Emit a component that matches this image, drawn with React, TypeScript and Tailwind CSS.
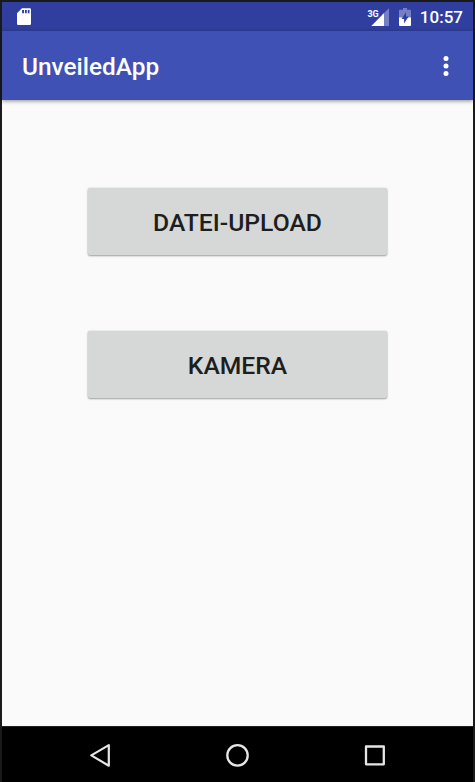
import React from "react";

function SdCardIcon() {
  return (
    <svg width="15" height="18" viewBox="0 0 15 18" className="block">
      <path fillRule="evenodd" fill="#fff" d="M5 0.2H12.8Q14 0.2 14 1.4V15.8Q14 17 12.8 17H1.2Q0 17 0 15.8V5.3ZM5.1 2V5.2H7V2ZM8 2V5.2H9.8V2ZM10.8 2V5.2H12.5V2Z" />
    </svg>
  );
}

function SignalIcon() {
  return (
    <svg width="24" height="20" viewBox="0 0 24 20" className="block">
      <text x="0.5" y="8.6" fill="#fff" fontSize="9.5" fontWeight="700" textLength="11.2" lengthAdjust="spacingAndGlyphs">3G</text>
      <path d="M17.3 4.8V18H4.3Z" fill="#fff" />
      <path d="M17.3 4.8L22 0.3V18H17.3Z" fill="#757fc4" />
    </svg>
  );
}

function BatteryIcon() {
  return (
    <svg width="12" height="18" viewBox="0 0 12 18" className="block">
      <path d="M4 0H8V1.8H11Q12 1.8 12 2.8V10H0V2.8Q0 1.8 1 1.8H4Z" fill="#757fc4" />
      <path d="M0 9.5H12V17Q12 18 11 18H1Q0 18 0 17Z" fill="#fff" />
      <path d="M7 4.3V8.6H9.6L5.1 15.6V11H2.6Z" fill="#303f9f" />
    </svg>
  );
}

function AppButton({ label }: { label: string }) {
  return (
    <button className="flex h-[67px] w-[299px] items-center justify-center rounded-[2px] bg-[#d6d8d7] pt-[3px] text-[24.7px] leading-7 font-medium text-[#1d1e1e] shadow-[0_1px_2px_rgba(0,0,0,0.34),0_0_2px_rgba(0,0,0,0.16)]">
      {label}
    </button>
  );
}

export default function App() {
  return (
    <div className="flex h-[782px] w-[475px] flex-col border-2 border-b-0 border-[#1b1a1b] bg-[#fafafa] font-[Roboto,sans-serif]">
      <div className="flex h-[29px] shrink-0 items-start bg-[#303f9f] text-white">
        <div className="pt-[6px] pl-[15px]"><SdCardIcon /></div>
        <div className="ml-auto pt-[6px]"><SignalIcon /></div>
        <div className="ml-[8px] pt-[6px]"><BatteryIcon /></div>
        <span className="mr-[10px] ml-[9px] pt-[5px] text-[17px] leading-5 font-medium">10:57</span>
      </div>
      <header className="flex h-[69px] shrink-0 items-center justify-between bg-[#3f51b5] pr-[24px] pl-[20px] text-white shadow-[0_1px_4px_rgba(0,0,0,0.45)]">
        <h1 className="pt-[2px] text-[24.4px] leading-7 font-medium">UnveiledApp</h1>
        <svg width="6" height="20" viewBox="0 0 6 20" fill="#fff">
          <circle cx="3" cy="2.6" r="2.5" />
          <circle cx="3" cy="10" r="2.5" />
          <circle cx="3" cy="17.4" r="2.5" />
        </svg>
      </header>
      <main className="flex flex-1 flex-col items-center gap-[76px] pt-[88px]">
        <AppButton label="DATEI-UPLOAD" />
        <AppButton label="KAMERA" />
      </main>
      <nav className="flex h-[56px] shrink-0 items-center justify-between border-t border-[#202020] bg-black px-[87px] pt-px">
        <svg width="22" height="26" viewBox="0 0 22 26" fill="none" stroke="#e6e6e6" strokeWidth="2.2" strokeLinejoin="round">
          <path d="M19.8 3.1V23.7L2.3 13.4Z" />
        </svg>
        <svg width="24" height="26" viewBox="0 0 24 26" fill="none" stroke="#e6e6e6" strokeWidth="2.3">
          <circle cx="11.5" cy="13.4" r="10.2" />
        </svg>
        <svg width="22" height="26" viewBox="0 0 22 26" fill="none" stroke="#e6e6e6" strokeWidth="2.3" strokeLinejoin="round">
          <rect x="2" y="4.5" width="17.8" height="17.8" />
        </svg>
      </nav>
    </div>
  );
}
